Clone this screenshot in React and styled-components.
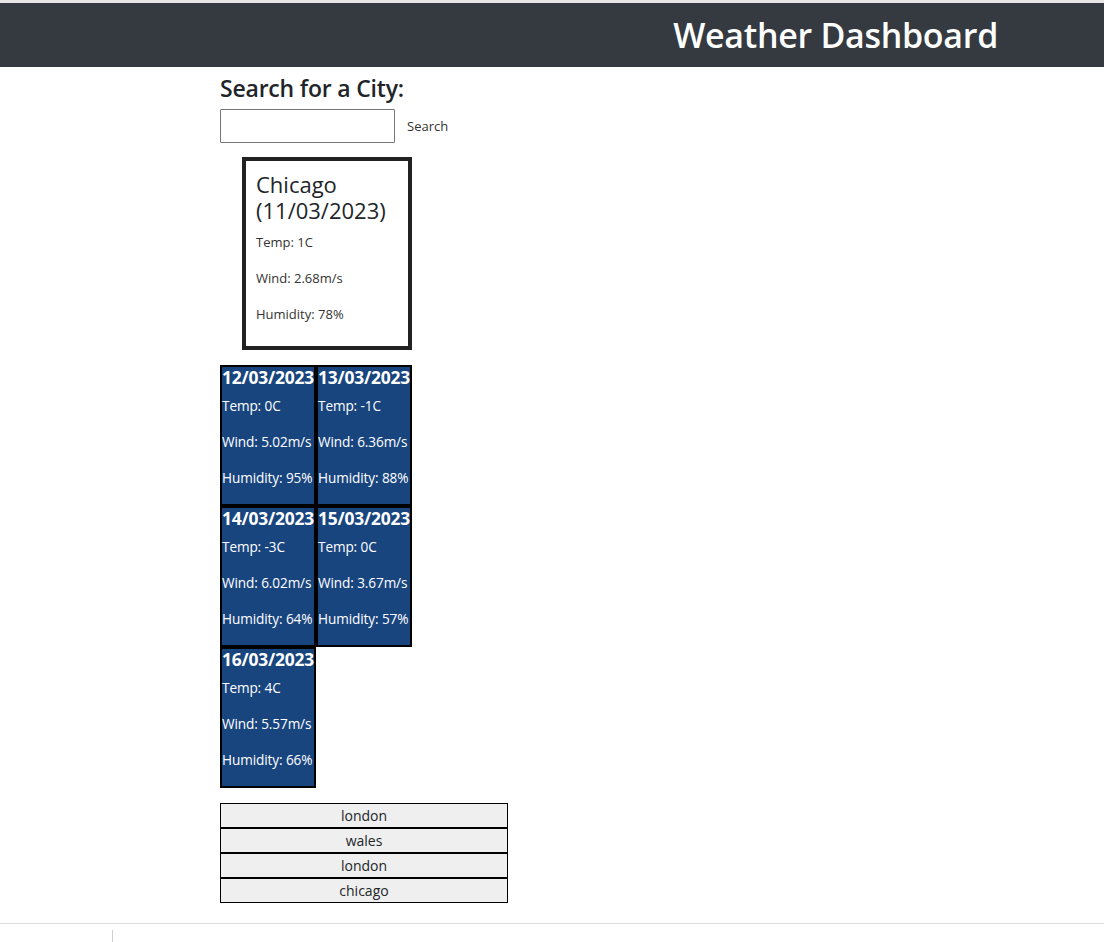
import React from "react";
import styled, { createGlobalStyle } from "styled-components";

const Global = createGlobalStyle`
  html, body { margin: 0; padding: 0; background: #fff; }
  body {
    font-family: "Open Sans", "Noto Sans", sans-serif;
    color: #212529;
    border-top: 3px solid #e6e6e6;
  }
  * { box-sizing: border-box; }
`;

const Header = styled.header`
  height: 64px;
  background: #343a40;
  display: flex;
  align-items: center;
  justify-content: flex-end;
  padding-right: 106px;
`;

const Title = styled.h1`
  margin: 0;
  color: #fff;
  font-size: 34px;
  font-weight: 600;
  letter-spacing: -0.3px;
`;

const Main = styled.main`
  padding-left: 220px;
  display: flex;
  flex-direction: column;
  align-items: flex-start;
`;

const SearchHeading = styled.h2`
  margin: 8px 0 6px;
  font-size: 23px;
  font-weight: 600;
  line-height: 1.2;
  letter-spacing: -0.2px;
  color: #212529;
`;

const SearchRow = styled.form`
  display: flex;
  align-items: center;
  gap: 6px;
  margin-bottom: 14px;
`;

const Input = styled.input`
  width: 175px;
  height: 34px;
  border: 1px solid #767676;
  border-radius: 1px;
  font-family: inherit;
`;

const PlainButton = styled.button`
  background: none;
  border: none;
  font-family: inherit;
  font-size: 13px;
  color: #333;
  padding: 0 6px;
  cursor: pointer;
`;

const CurrentCard = styled.section`
  margin-left: 22px;
  width: 170px;
  border: 4px solid #222;
  padding: 10px 10px 6px 10px;
`;

const CityTitle = styled.h3`
  margin: 0 0 9px;
  font-size: 22px;
  font-weight: 500;
  line-height: 26px;
  color: #212529;
`;

const Line = styled.p`
  margin: 0 0 16px;
  font-size: ${(p) => (p.$light ? "13.6px" : "13px")};
  line-height: 20px;
  white-space: nowrap;
  color: ${(p) => (p.$light ? "#fff" : "#333")};
  letter-spacing: ${(p) => (p.$light ? "-0.1px" : "0")};
`;

const ForecastGrid = styled.div`
  margin-top: 15px;
  width: 192px;
  display: flex;
  flex-wrap: wrap;
`;

const ForecastCard = styled.div`
  width: 96px;
  border: 2px solid #000;
  background: #19457f;
  color: #fff;
  overflow: visible;
`;

const DateTitle = styled.h4`
  margin: 0 0 8px;
  font-size: 17.4px;
  font-weight: 700;
  line-height: 21px;
  white-space: nowrap;
  letter-spacing: -0.2px;
  color: #fff;
`;

const History = styled.div`
  margin-top: 15px;
  display: flex;
  flex-direction: column;
`;

const HistoryButton = styled.button`
  width: 288px;
  height: 25px;
  border: 1px solid #000;
  background: #efefef;
  font-family: inherit;
  font-size: 14px;
  color: #212529;
  padding: 0;
  margin: 0;
  cursor: pointer;
`;

const Footer = styled.footer`
  margin-top: 20px;
  border-top: 1px solid #dddddd;
  height: 20px;
  padding-left: 112px;
  padding-top: 6px;
`;

const Caret = styled.span`
  display: block;
  width: 1px;
  height: 14px;
  background: #cfcfcf;
`;

const forecast = [
  { date: "12/03/2023", temp: "0C", wind: "5.02m/s", hum: "95%" },
  { date: "13/03/2023", temp: "-1C", wind: "6.36m/s", hum: "88%" },
  { date: "14/03/2023", temp: "-3C", wind: "6.02m/s", hum: "64%" },
  { date: "15/03/2023", temp: "0C", wind: "3.67m/s", hum: "57%" },
  { date: "16/03/2023", temp: "4C", wind: "5.57m/s", hum: "66%" },
];

const history = ["london", "wales", "london", "chicago"];

export default function App() {
  return (
    <>
      <Global />
      <Header>
        <Title>Weather Dashboard</Title>
      </Header>
      <Main>
        <SearchHeading>Search for a City:</SearchHeading>
        <SearchRow onSubmit={(e) => e.preventDefault()}>
          <Input type="text" />
          <PlainButton type="submit">Search</PlainButton>
        </SearchRow>
        <CurrentCard>
          <CityTitle>
            Chicago
            <br />
            (11/03/2023)
          </CityTitle>
          <Line>Temp: 1C</Line>
          <Line>Wind: 2.68m/s</Line>
          <Line>Humidity: 78%</Line>
        </CurrentCard>
        <ForecastGrid>
          {forecast.map((f) => (
            <ForecastCard key={f.date}>
              <DateTitle>{f.date}</DateTitle>
              <Line $light>Temp: {f.temp}</Line>
              <Line $light>Wind: {f.wind}</Line>
              <Line $light>Humidity: {f.hum}</Line>
            </ForecastCard>
          ))}
        </ForecastGrid>
        <History>
          {history.map((h, i) => (
            <HistoryButton key={i}>{h}</HistoryButton>
          ))}
        </History>
      </Main>
      <Footer>
        <Caret />
      </Footer>
    </>
  );
}
